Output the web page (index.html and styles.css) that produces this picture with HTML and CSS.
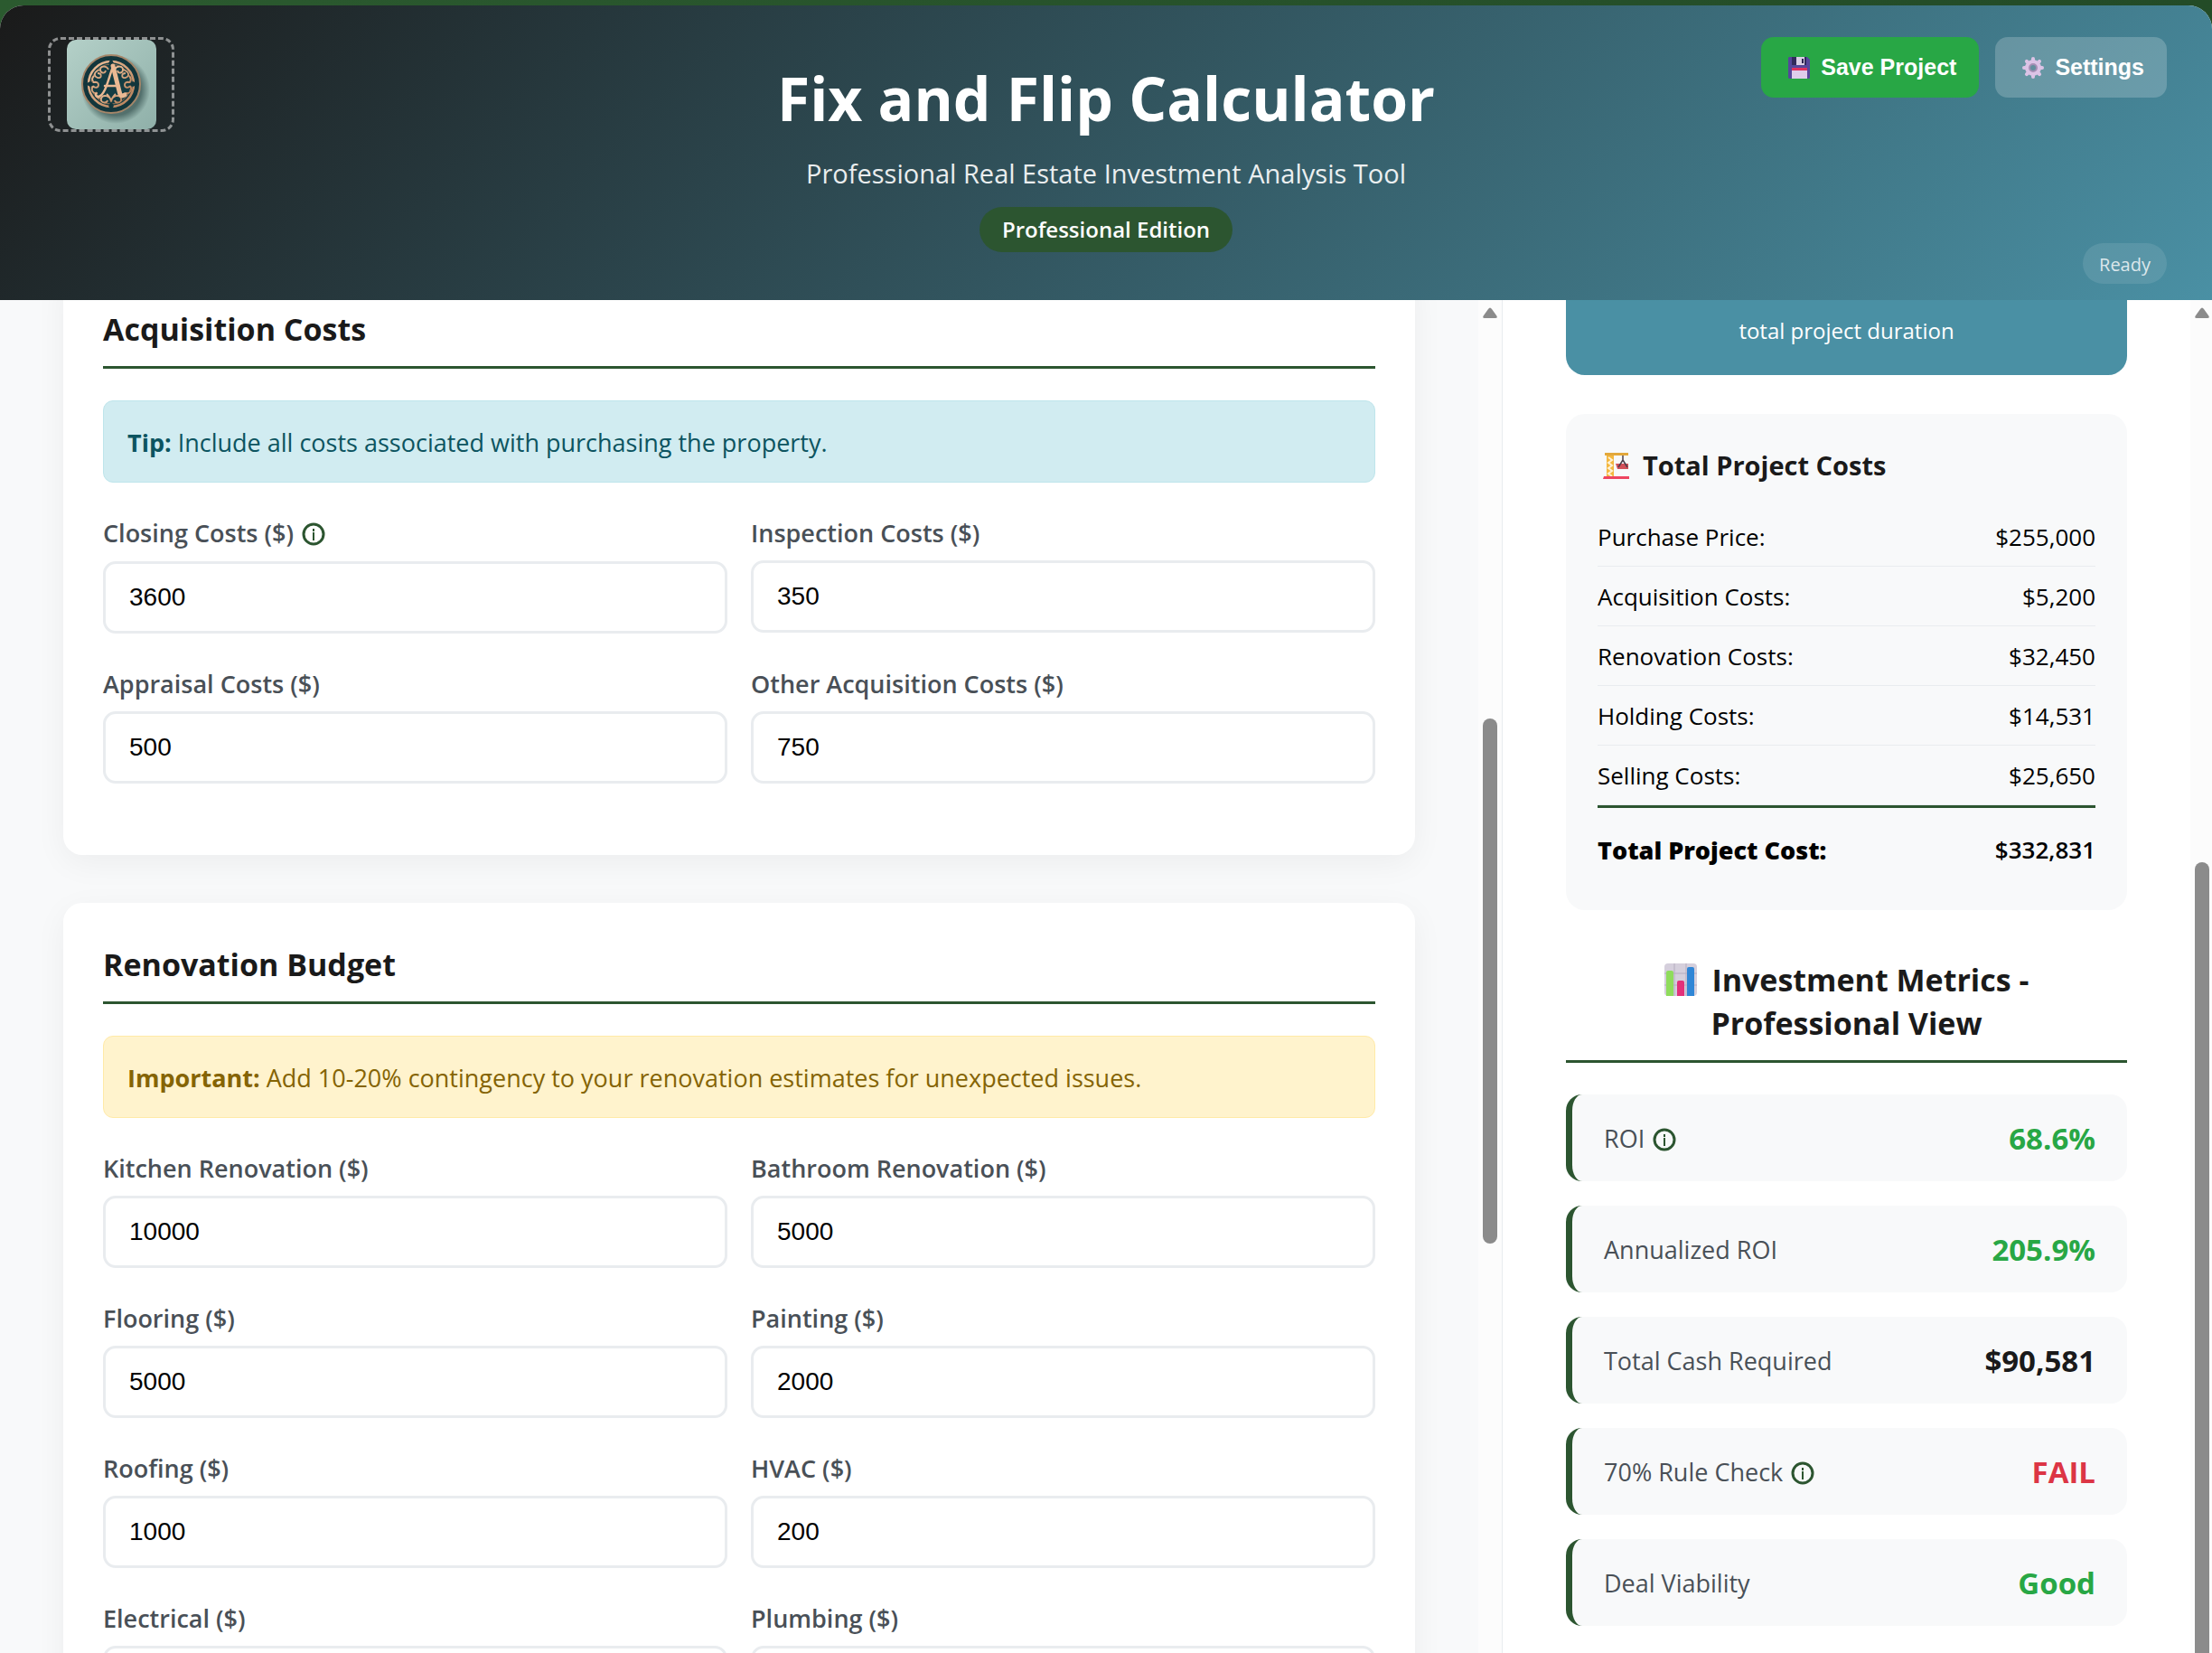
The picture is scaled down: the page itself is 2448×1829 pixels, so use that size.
FILE: index.html
```html
<!DOCTYPE html>
<html lang="en">
<head>
<meta charset="UTF-8">
<meta name="viewport" content="width=device-width, initial-scale=1.0">
<title>Fix and Flip Calculator</title>
<link rel="stylesheet" href="styles.css">
</head>
<body>
<svg width="0" height="0" class="defs">
  <symbol id="info" viewBox="0 0 26 26">
    <circle cx="13" cy="13" r="11" fill="none" stroke="#2c5530" stroke-width="3"/>
    <rect x="12" y="7" width="2" height="3" fill="#2c5530"/>
    <rect x="12" y="11" width="2" height="9" fill="#2c5530"/>
  </symbol>
</svg>
<div class="container">

  <header class="header">
    <div class="logo">
      <svg viewBox="0 0 99 99" width="99" height="99">
        <defs>
          <linearGradient id="lg" x1="0" y1="0" x2="1" y2="1"><stop offset="0" stop-color="#b4d0c8"/><stop offset="1" stop-color="#8fb0a9"/></linearGradient>
          <linearGradient id="gold" x1="0" y1="0" x2="1" y2="1"><stop offset="0" stop-color="#efc09a"/><stop offset="1" stop-color="#b67f58"/></linearGradient>
          <radialGradient id="sh"><stop offset=".75" stop-color="#35514f" stop-opacity=".7"/><stop offset="1" stop-color="#35514f" stop-opacity="0"/></radialGradient>
        </defs>
        <rect width="99" height="99" rx="10" fill="url(#lg)"/>
        <circle cx="54" cy="55" r="38" fill="url(#sh)"/>
        <circle cx="49" cy="49" r="32" fill="#12363c" stroke="#a58669" stroke-width="2"/>
        <circle cx="49" cy="49" r="25" fill="#153d43" stroke="url(#gold)" stroke-width="2.5"/>
        <circle cx="49" cy="49" r="22" fill="none" stroke="#9a7253" stroke-width="1"/>
        <g fill="none" stroke="url(#gold)" stroke-width="1.8">
          <path d="M46 33c-2-5-9-4-9 0s5 5 6 1M37 33c-7 2-8 7-3 9 5 1 5-5 0-5M30 40c-4 4-1 8 3 7M27 49c4-4 8-2 8 1s-4 4-6 1M29 51c-3 5 0 9 5 8M33 58c-3 4 2 8 6 6"/>
          <path d="M53 33c2-5 9-4 9 0s-5 5-6 1M62 33c7 2 8 7 3 9-5 1-5-5 0-5M69 40c4 4 1 8-3 7M72 49c-4-4-8-2-8 1s4 4 6 1M70 51c3 5 0 9-5 8"/>
          <path d="M49 70c0-9-10-10-11-5s6 6 7 2M49 70c0-9 10-10 11-5s-6 6-7 2M44 60c2 2 5 4 5 10 0-6 3-8 5-10"/>
        </g>
        <path d="M49 20l3 6-3 5-3-5zM49 68l3 5-3 6-3-6zM20 49l6-3 5 3-5 3zM68 49l5-3 6 3-6 3z" fill="#12363c"/>
        <g fill="none" stroke="#eab993" stroke-linecap="round">
          <path d="M51 30C46 42 43 61 35 63c-2 0-3-1-3-3" stroke-width="2.5"/>
          <path d="M51 29l7 28c1 5 3 6 6 4" stroke-width="5"/>
          <path d="M42 51h14" stroke-width="2.5"/>
        </g>
      </svg>
    </div>
    <div class="header-title">
      <h1>Fix and Flip Calculator</h1>
      <p>Professional Real Estate Investment Analysis Tool</p>
      <span class="badge">Professional Edition</span>
    </div>
    <div class="header-actions">
      <button type="button" class="btn btn-save">
        <svg viewBox="0 0 24 24" width="24" height="24">
          <path d="M1 0h20l3 3v20l-1 1H1l-1-1V1z" fill="#55469b"/>
          <path d="M4 0h16v9H4z" fill="#322a5c"/>
          <path d="M9 0h9v9H9z" fill="#d9cfe4"/>
          <path d="M15 2h2v5h-2z" fill="#2b2350"/>
          <path d="M4 12h17v12H4z" fill="#dfcdeb"/>
          <path d="M4 12h17v3H4z" fill="#e0315f"/>
        </svg>
        Save Project
      </button>
      <button type="button" class="btn btn-settings">
        <svg viewBox="0 0 24 24" width="24" height="24">
          <g fill="#dcc3e6">
            <rect x="10" y="0" width="4" height="24" rx="2"/>
            <rect x="10" y="0" width="4" height="24" rx="2" transform="rotate(45 12 12)"/>
            <rect x="10" y="0" width="4" height="24" rx="2" transform="rotate(90 12 12)"/>
            <rect x="10" y="0" width="4" height="24" rx="2" transform="rotate(135 12 12)"/>
            <circle cx="12" cy="12" r="9"/>
          </g>
          <circle cx="12" cy="12" r="4" fill="#648e9e" stroke="#a58fb5" stroke-width="2"/>
        </svg>
        Settings
      </button>
    </div>
    <span class="status">Ready</span>
  </header>

  <div class="main">
    <div class="pane">
      <div class="form-area">

        <section class="card">
          <h2>Acquisition Costs</h2>
          <div class="alert alert-info"><strong>Tip:</strong> Include all costs associated with purchasing the property.</div>
          <div class="form-grid">
            <div class="form-group">
              <label for="closing" class="with-info">Closing Costs ($) <svg class="info" width="26" height="26"><use href="#info"/></svg></label>
              <input type="text" id="closing" value="3600">
            </div>
            <div class="form-group">
              <label for="inspection">Inspection Costs ($)</label>
              <input type="text" id="inspection" value="350">
            </div>
            <div class="form-group">
              <label for="appraisal">Appraisal Costs ($)</label>
              <input type="text" id="appraisal" value="500">
            </div>
            <div class="form-group">
              <label for="otherAcq">Other Acquisition Costs ($)</label>
              <input type="text" id="otherAcq" value="750">
            </div>
          </div>
        </section>

        <section class="card">
          <h2>Renovation Budget</h2>
          <div class="alert alert-warning"><strong>Important:</strong> Add 10-20% contingency to your renovation estimates for unexpected issues.</div>
          <div class="form-grid">
            <div class="form-group">
              <label for="kitchen">Kitchen Renovation ($)</label>
              <input type="text" id="kitchen" value="10000">
            </div>
            <div class="form-group">
              <label for="bathroom">Bathroom Renovation ($)</label>
              <input type="text" id="bathroom" value="5000">
            </div>
            <div class="form-group">
              <label for="flooring">Flooring ($)</label>
              <input type="text" id="flooring" value="5000">
            </div>
            <div class="form-group">
              <label for="painting">Painting ($)</label>
              <input type="text" id="painting" value="2000">
            </div>
            <div class="form-group">
              <label for="roofing">Roofing ($)</label>
              <input type="text" id="roofing" value="1000">
            </div>
            <div class="form-group">
              <label for="hvac">HVAC ($)</label>
              <input type="text" id="hvac" value="200">
            </div>
            <div class="form-group">
              <label for="electrical">Electrical ($)</label>
              <input type="text" id="electrical">
            </div>
            <div class="form-group">
              <label for="plumbing">Plumbing ($)</label>
              <input type="text" id="plumbing">
            </div>
          </div>
        </section>

      </div>
      <div class="scrollbar scrollbar-form">
        <svg viewBox="0 0 16 12" width="16" height="12"><path d="M2 12q-3 0-1-3l5-7q2-3 4 0l5 7q2 3-1 3z" fill="#8b8b8b"/></svg>
        <div class="thumb"></div>
      </div>
    </div>

    <aside class="pane sidebar">
      <div class="results">
        <div class="time-card">total project duration</div>

        <div class="cost-card">
          <h3>
            <svg viewBox="0 0 30 30" width="30" height="30">
              <path d="M4 2h8v26H4z" fill="#f4b73f"/>
              <path d="M6 6l4 3-4 3 4 3-4 3 4 3-4 3 4 3" fill="none" stroke="#fff3d6" stroke-width="2"/>
              <path d="M2 1h26v3H2z" fill="#e2a83c"/>
              <path d="M14 13h14v6H16z" fill="#d2505a"/>
              <path d="M22 4v6M22 9l-5 8M22 9l5 8" fill="none" stroke="#4a3f4c" stroke-width="1.5"/>
              <path d="M1 27h28v3H0z" fill="#ee4560"/>
            </svg>
            Total Project Costs
          </h3>
          <table class="costs">
            <tbody>
              <tr><td>Purchase Price:</td><td>$255,000</td></tr>
              <tr><td>Acquisition Costs:</td><td>$5,200</td></tr>
              <tr><td>Renovation Costs:</td><td>$32,450</td></tr>
              <tr><td>Holding Costs:</td><td>$14,531</td></tr>
              <tr><td>Selling Costs:</td><td>$25,650</td></tr>
            </tbody>
            <tfoot>
              <tr><th scope="row">Total Project Cost:</th><td>$332,831</td></tr>
            </tfoot>
          </table>
        </div>

        <h2 class="metrics-title">
          <svg viewBox="0 0 36 36" width="36" height="36">
            <rect width="36" height="36" rx="4" fill="#d5cfdc"/>
            <path d="M11 0v36M24 0v36M0 11h36M0 24h36" stroke="#b5adc0" stroke-width="1"/>
            <path d="M2 10q0-2 2-2h4q2 0 2 2v26H2z" fill="#8fdc5c"/>
            <path d="M14 21q0-2 2-2h4q2 0 2 2v15h-8z" fill="#e2317a"/>
            <path d="M25 6q0-2 2-2h4q2 0 2 2v30h-8z" fill="#2f86d6"/>
          </svg>
          Investment Metrics - Professional View
        </h2>

        <div class="metric"><span>ROI <svg class="info" width="26" height="26"><use href="#info"/></svg></span><strong class="good">68.6%</strong></div>
        <div class="metric"><span>Annualized ROI</span><strong class="good">205.9%</strong></div>
        <div class="metric"><span>Total Cash Required</span><strong>$90,581</strong></div>
        <div class="metric"><span>70% Rule Check <svg class="info" width="26" height="26"><use href="#info"/></svg></span><strong class="bad">FAIL</strong></div>
        <div class="metric"><span>Deal Viability</span><strong class="good">Good</strong></div>
      </div>
      <div class="scrollbar scrollbar-results">
        <svg viewBox="0 0 16 12" width="16" height="12"><path d="M2 12q-3 0-1-3l5-7q2-3 4 0l5 7q2 3-1 3z" fill="#8b8b8b"/></svg>
        <div class="thumb"></div>
      </div>
    </aside>
  </div>

</div>
</body>
</html>
```
FILE: styles.css
```css
* {
	margin: 0;
	padding: 0;
	box-sizing: border-box;
}
body {
	font-family: "Open Sans", "Noto Sans", sans-serif;
	font-size: 27px;
	color: #000;
	background: linear-gradient(90deg, #2b5a2f, #234b27);
	height: 100vh;
	padding-top: 6px;
	overflow: hidden;
}
.defs {
	position: absolute;
}
.container {
	display: flex;
	flex-direction: column;
	height: 100%;
	background: #fff;
	border-radius: 26px 26px 0 0;
	overflow: hidden;
}

/* header */
.header {
	position: relative;
	flex: none;
	padding: 56px 50px 53px;
	background: linear-gradient(135deg, #1a1a1a 0%, #4a90a4 100%);
	color: #fff;
	text-align: center;
}
.logo {
	position: absolute;
	top: 35px;
	left: 53px;
	width: 140px;
	height: 105px;
	border: 3px dashed rgba(255,255,255,0.5);
	border-radius: 14px;
}
.logo svg {
	display: block;
	margin: 0 auto;
}
.header h1 {
	font-size: 66px;
	font-weight: 700;
	line-height: 92px;
	margin-bottom: 17px;
}
.header p {
	font-size: 29px;
	line-height: 42px;
	margin-bottom: 16px;
	opacity: 0.9;
}
.badge {
	display: inline-block;
	padding: 7px 25px;
	background: #2c5530;
	border-radius: 35px;
	font-size: 24px;
	font-weight: 600;
	line-height: 36px;
}
.header-actions {
	position: absolute;
	top: 35px;
	right: 50px;
	display: flex;
	gap: 18px;
}
.btn {
	display: flex;
	align-items: center;
	gap: 12px;
	height: 67px;
	padding: 0 25px 0 30px;
	border: none;
	border-radius: 14px;
	color: #fff;
	font-family: "Liberation Sans", Arial, sans-serif;
	font-size: 25px;
	font-weight: 700;
}
.btn-save {
	background: #28a745;
}
.btn-settings {
	background: rgba(255,255,255,0.2);
}
.status {
	position: absolute;
	right: 50px;
	bottom: 18px;
	padding: 8px 18px 6px;
	background: rgba(255,255,255,0.1);
	border-radius: 26px;
	color: rgba(255,255,255,0.8);
	font-size: 20px;
	line-height: 31px;
}

/* two panes */
.main {
	flex: 1;
	min-height: 0;
	display: grid;
	grid-template-columns: 1fr 785px;
}
.pane {
	display: flex;
	min-width: 0;
	min-height: 0;
	overflow: hidden;
	background: #f8f9fa;
	border-right: 1px solid #e9ecef;
}
.sidebar {
	background: #fff;
	border-right: none;
}
.form-area {
	flex: 1;
	padding: 0 70px;
	margin-top: -36px; /* scrolled a little */
}
.results {
	flex: 1;
	padding: 0 70px;
}
.scrollbar {
	flex: none;
	width: 26px;
	padding: 8px 5px 0;
	background: #fcfcfc;
}
.scrollbar svg {
	display: block;
}
.thumb {
	width: 16px;
	border-radius: 8px;
	background: #8b8b8b;
}
.scrollbar-form .thumb {
	height: 39%;
	margin-top: 443px;
}
.scrollbar-results {
	width: 24px;
}
.scrollbar-results .thumb {
	height: 100%;
	margin-top: 602px;
}

/* form cards */
.card {
	background: #fff;
	border-radius: 21px;
	padding: 44px;
	margin-bottom: 53px;
	box-shadow: 0 9px 35px rgba(0,0,0,0.05);
}
h2 {
	font-size: 34px;
	font-weight: 700;
	line-height: 48px;
	color: #1a1a1a;
	padding-bottom: 17px;
	margin-bottom: 35px;
	border-bottom: 3px solid #2c5530;
}
.alert {
	padding: 27px 26px 25px;
	margin-bottom: 35px;
	border: 1px solid;
	border-radius: 11px;
	line-height: 37px;
}
.alert-info {
	background: #d1ecf1;
	border-color: #bee5eb;
	color: #0c5460;
}
.alert-warning {
	background: #fff3cd;
	border-color: #ffeaa7;
	color: #856404;
}
.form-grid {
	display: grid;
	grid-template-columns: 1fr 1fr;
	column-gap: 26px;
}
.form-group {
	margin-bottom: 35px;
}
.form-group label {
	display: block;
	margin-bottom: 9px;
	font-weight: 600;
	line-height: 42px;
	color: #495057;
}
.form-group .with-info {
	margin-bottom: 10px;
}
.form-group input {
	display: block;
	width: 100%;
	height: 80px;
	padding: 0 26px;
	border: 3px solid #e9ecef;
	border-radius: 14px;
	background: #fff;
	font-family: "Liberation Sans", Arial, sans-serif;
	font-size: 28px;
	color: #000;
}
.info {
	vertical-align: -4px;
	margin-left: 2px;
}

/* results */
.time-card {
	height: 83px;
	padding-top: 14px;
	margin-bottom: 43px;
	border-radius: 0 0 21px 21px;
	background: #4a90a4;
	color: #fff;
	font-size: 24px;
	line-height: 40px;
	text-align: center;
}
.cost-card {
	padding: 35px;
	margin-bottom: 53px;
	border-radius: 21px;
	background: #f8f9fa;
}
.cost-card h3 {
	display: flex;
	align-items: center;
	gap: 14px;
	padding-left: 6px;
	margin-bottom: 25px;
	font-size: 29px;
	font-weight: 700;
	line-height: 43px;
	color: #1a1a1a;
}
.costs {
	width: 100%;
	border-collapse: separate;
	border-spacing: 0;
	font-size: 26px;
	line-height: 37px;
}
.costs td {
	padding: 15px 0 13px;
	border-bottom: 1px solid #e9ecef;
}
.costs td:last-child {
	text-align: right;
}
.costs tfoot th,
.costs tfoot td {
	padding: 28px 0 13px;
	border-top: 3px solid #2c5530;
	border-bottom: none;
	font-weight: 600;
}
.costs tfoot th {
	text-align: left;
	font-size: 27px;
	font-weight: 800;
}
.metrics-title {
	text-align: center;
}
.metrics-title svg {
	vertical-align: -5px;
	margin-right: 8px;
}
.metric {
	display: flex;
	justify-content: space-between;
	align-items: center;
	height: 96px;
	padding: 0 35px;
	margin-bottom: 27px;
	border-left: 7px solid #2c5530;
	border-radius: 18px;
	background: #f8f9fa;
}
.metric span {
	font-weight: 500;
	color: #495057;
}
.metric strong {
	font-size: 33px;
	font-weight: 700;
	color: #1a1a1a;
}
.metric .good {
	color: #28a745;
}
.metric .bad {
	color: #dc3545;
}
```
